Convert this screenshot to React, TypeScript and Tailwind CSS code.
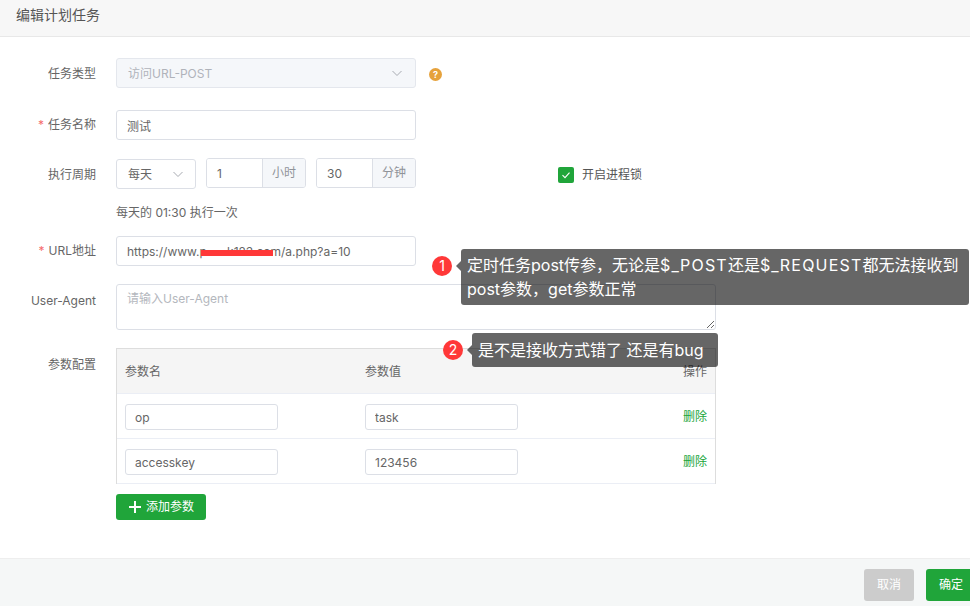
import React from "react";

const Chevron = () => (
  <svg width="12" height="12" viewBox="0 0 12 12" fill="none" stroke="#a8abb2" strokeWidth="1">
    <path d="M1.5 4 L6 8.5 L10.5 4" />
  </svg>
);

const Label = ({ children, required, className = "" }: { children: React.ReactNode; required?: boolean; className?: string }) => (
  <div className={`w-[96px] shrink-0 h-[30px] text-right text-[12px] text-[#666] mr-5 ${className}`}>
    {required && <span className="text-[#f56c6c] mr-1">*</span>}
    {children}
  </div>
);

const textInput =
  "border border-[#dcdfe6] rounded-[3px] bg-white text-[12px] text-[#666] outline-none";

const Group = ({ value, unit }: { value: string; unit: string }) => (
  <div className="flex w-[100px] h-[30px] border border-[#dcdfe6] rounded-[3px] overflow-hidden">
    <div className="w-[55px] pl-[10px] leading-[29px] text-[12px] text-[#666] bg-white">{value}</div>
    <div className="flex-1 border-l border-[#dcdfe6] bg-[#f5f7fa] text-center leading-[28px] text-[12px] text-[#909399]">
      {unit}
    </div>
  </div>
);

const Row = ({ a, b }: { a: string; b: string }) => (
  <div className="flex items-center border-b border-[#ebeef5] pl-2 pr-2 pt-[2px] h-[45px]">
    <input readOnly value={a} className={`${textInput} w-[153px] h-[26px] px-[9px]`} />
    <input readOnly value={b} className={`${textInput} w-[153px] h-[26px] px-[9px] ml-[87px]`} />
    <span className="ml-auto text-[12px] text-[#20a53a] leading-[18px]">删除</span>
  </div>
);

const Note = ({ children, className }: { children: React.ReactNode; className: string }) => (
  <div className={`absolute ${className}`}>{children}</div>
);

const Badge = ({ n, className }: { n: string; className: string }) => (
  <div
    className={`absolute w-5 h-5 rounded-full bg-[#ff3838] text-white text-[14px] leading-5 text-center ${className}`}
  >
    {n}
  </div>
);

const Arrow = ({ className }: { className: string }) => (
  <div
    className={`absolute w-0 h-0 border-y-[5px] border-y-transparent border-r-[5px] border-r-[rgba(0,0,0,0.6)] ${className}`}
  />
);

export default function App() {
  return (
    <div className="relative w-[970px] h-[606px] overflow-hidden bg-white flex flex-col font-['Inter','Noto_Sans_CJK_SC',sans-serif]">
      <header className="h-[37px] shrink-0 border-b border-[#e8e8e8] bg-[#f7f7f7] pl-4 text-[14px] leading-[30px] text-[#555]">
        编辑计划任务
      </header>

      <main className="flex-1 pt-[21px] flex flex-col">
        <div className="flex items-start">
          <Label className="leading-[32px]">任务类型</Label>
          <div className="w-[300px] h-[30px] border border-[#e4e7ed] rounded-[3px] bg-[#f5f7fa] flex items-center justify-between pl-[11px] pr-[12px] text-[12px] text-[#b0b3ba]">
            <span className="pt-px">访问URL-POST</span>
            <Chevron />
          </div>
          <div className="ml-[13px] mt-[10px] w-[13px] h-[13px] rounded-full bg-[#e6a23c] text-white text-[9px] leading-[13px] text-center font-bold">
            ?
          </div>
        </div>

        <div className="flex items-start mt-[22px]">
          <Label required className="leading-[30px]">任务名称</Label>
          <input readOnly value="测试" className={`${textInput} w-[300px] h-[30px] px-[10px]`} />
        </div>

        <div className="flex items-start mt-[18px]">
          <div className="mt-px">
            <Label className="leading-[32px]">执行周期</Label>
          </div>
          <div className="mt-px w-[80px] h-[30px] border border-[#dcdfe6] rounded-[3px] flex items-center justify-between pl-[11px] pr-[11px] text-[12px] text-[#666]">
            <span className="pt-px">每天</span>
            <Chevron />
          </div>
          <div className="ml-[10px]">
            <Group value="1" unit="小时" />
          </div>
          <div className="ml-[10px]">
            <Group value="30" unit="分钟" />
          </div>
          <div className="ml-[142px] mt-2 flex items-center">
            <div className="w-4 h-4 rounded-[2px] bg-[#20a53a] flex items-center justify-center">
              <svg width="12" height="12" viewBox="0 0 12 12" fill="none" stroke="#fff" strokeWidth="1.1">
                <path d="M2.5 6.2 L5 8.7 L9.5 3.6" />
              </svg>
            </div>
            <span className="ml-2 text-[12px] text-[#555]">开启进程锁</span>
          </div>
        </div>

        <div className="ml-[116px] mt-[14px] h-[18px] leading-[20px] text-[12px] text-[#666]">每天的 01:30 执行一次</div>

        <div className="flex items-start mt-[15px]">
          <Label required className="leading-[30px]">URL地址</Label>
          <div className="relative">
            <input
              readOnly
              value="https://www.p      k123.com/a.php?a=10"
              className={`${textInput} w-[300px] h-[30px] px-[10px]`}
            />
            <div className="absolute left-[85px] top-[14px] w-[72px] h-[6px] bg-[#ff3838]" />
          </div>
        </div>

        <div className="flex items-start mt-[18px]">
          <Label className="leading-[33px]">User-Agent</Label>
          <textarea
            readOnly
            placeholder="请输入User-Agent"
            className={`${textInput} w-[600px] h-[46px] px-[10px] py-[5px] leading-[18px] placeholder:text-[#b4b7bd]`}
          />
        </div>

        <div className="flex items-start mt-[18px]">
          <Label className="leading-[34px]">参数配置</Label>
          <div className="w-[600px] border-x border-[#dddddd] border-t border-t-[#dddddd]">
            <div className="flex items-center h-[45px] bg-[#f5f5f5] border-b border-[#ebeef5] px-2 pt-[2px] text-[12px] text-[#666]">
              <span className="w-[240px]">参数名</span>
              <span>参数值</span>
              <span className="ml-auto">操作</span>
            </div>
            <Row a="op" b="task" />
            <Row a="accesskey" b="123456" />
          </div>
        </div>

        <button className="ml-[116px] mt-[10px] w-[90px] h-[26px] rounded-[3px] bg-[#20a53a] text-white text-[12px] flex items-center pl-[13px]">
          <svg width="12" height="12" viewBox="0 0 12 12" stroke="#fff" strokeWidth="2" className="mr-[5px]">
            <path d="M6 0 V12 M0 6 H12" />
          </svg>
          添加参数
        </button>
      </main>

      <footer className="h-[48px] shrink-0 border-t border-[#eeeeee] bg-[#f5f7f7] flex justify-end items-start pt-[10px] -mr-[6px]">
        <button className="w-[50px] h-[32px] rounded-[3px] bg-[#cccccc] text-white text-[12px]">取消</button>
        <button className="ml-3 w-[50px] h-[32px] rounded-[3px] bg-[#20a53a] text-white text-[12px]">确定</button>
      </footer>

      <Badge n="1" className="left-[432px] top-[256px]" />
      <Arrow className="left-[456px] top-[261px]" />
      <Note className="left-[461px] top-[249px] w-[508px] h-[56px] rounded-[3px] bg-[rgba(0,0,0,0.6)] px-[6px] py-1 text-[16px] leading-6 text-white whitespace-nowrap">
        定时任务post传参，无论是<span className="tracking-[1.2px]">$_POST</span>还是<span className="tracking-[1.2px]">$_REQUEST</span>都无法接收到
        <br />
        post参数，get参数正常
      </Note>

      <Badge n="2" className="left-[443px] top-[340px]" />
      <Arrow className="left-[467px] top-[345px]" />
      <Note className="left-[472px] top-[333px] w-[246px] h-[34px] rounded-[3px] bg-[rgba(0,0,0,0.6)] px-[6px] py-[5px] text-[16px] leading-6 text-white whitespace-nowrap">
        是不是接收方式错了 还是有bug
      </Note>
    </div>
  );
}
